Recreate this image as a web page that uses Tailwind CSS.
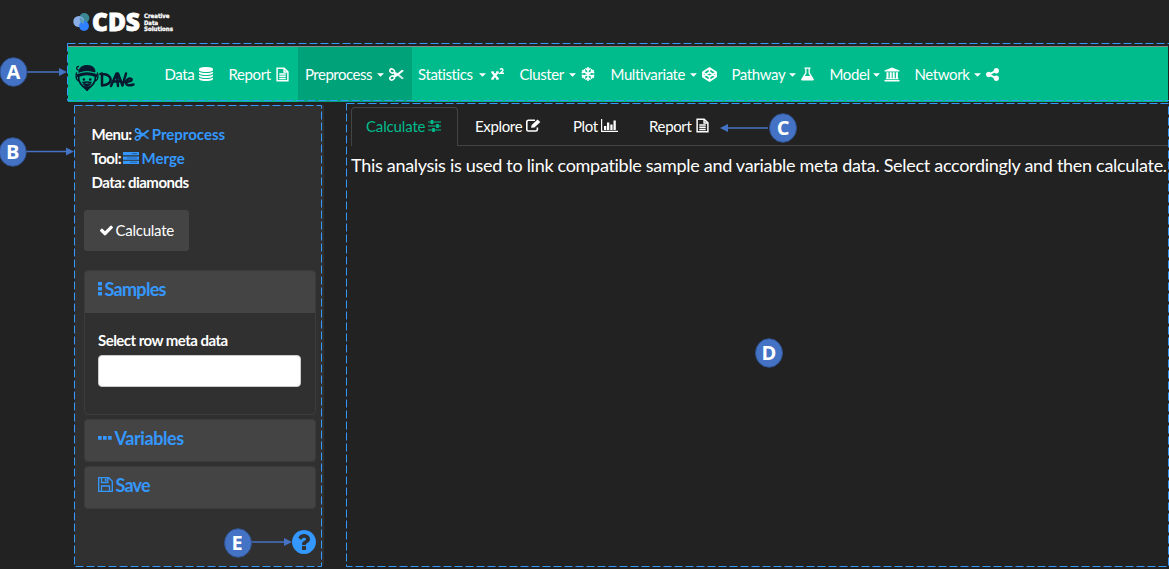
<!DOCTYPE html>
<html lang="en">
<head>
<meta charset="utf-8">
<title>DAVe</title>
<script src="https://cdn.jsdelivr.net/npm/@tailwindcss/browser@4"></script>
</head>
<body class="bg-[#222] text-white font-['Lato',sans-serif] text-[15px] leading-[22px]">
<svg class="hidden">
  <symbol id="caret" viewBox="0 0 8 4"><path d="M0 0h8L4 4z"/></symbol>
  <symbol id="doc" viewBox="0 0 14 16"><g fill="none" stroke="currentColor" stroke-width="1.600"><path d="M1.2 1.2h7.600l4 4v9.600H1.200z"/><path d="M8.700 1v4.300h4M3.500 7.500h7M3.500 10h7M3.500 12.400h7"/></g></symbol>
  <symbol id="scissors" viewBox="0 0 16 14"><g fill="none" stroke="currentColor" stroke-width="1.700"><ellipse cx="3.300" cy="3.200" rx="2.600" ry="2" transform="rotate(28 3.300 3.200)"/><ellipse cx="3.300" cy="10.800" rx="2.600" ry="2" transform="rotate(-28 3.300 10.800)"/></g><path d="M5 4.500 8.500 6.300 14 2l2 .9L9.500 8.300 5.700 10.500 4.500 9.200 7 7 4.400 5.800z"/><path d="M5 9.500 8.500 7.700 14 12l2-.9L9.500 5.700 5.700 3.500z" fill-opacity=".8"/></symbol>
</svg>
<div class="relative w-[1169px] h-[569px] overflow-hidden flex flex-col">
  <header class="h-[46px] shrink-0 flex pl-[73px] pt-[12px]">
    <svg class="w-[17px] h-[20px]" viewBox="0 0 17 20"><circle cx="11.300" cy="6" r="5" fill="#3b8795"/><circle cx="5.800" cy="9.500" r="5.500" fill="#8aaee6"/><circle cx="11" cy="14" r="4.900" fill="#2f80ff"/><path d="M7 5.500a5.500 5.500 0 0 1 4 6.300 5 5 0 0 1-4.400-5z" fill="#5a9ab8"/></svg>
    <svg class="w-[86px] h-[28px] ml-[1px] overflow-visible" viewBox="0 0 86 28" fill="#fff" stroke="#fff"><text x="1" y="18.800" font-family="Open Sans" font-weight="800" font-size="24" textLength="48" lengthAdjust="spacingAndGlyphs" stroke-width=".8">CDS</text><g font-family="DejaVu Sans" font-weight="700" font-size="6" stroke-width=".3"><text x="53" y="5.800" textLength="25.500" lengthAdjust="spacingAndGlyphs">Creative</text><text x="53" y="12.500" textLength="14" lengthAdjust="spacingAndGlyphs">Data</text><text x="53" y="19.300" textLength="29" lengthAdjust="spacingAndGlyphs">Solutions</text></g></svg>
  </header>

  <nav class="ml-[68px] mr-[1px] h-[56px] shrink-0 bg-[#00bc8c] border-t border-[#8b8b8b] flex tracking-[-0.4px]">
    <div class="w-[89px] pl-[7px] pt-[17px]">
      <svg class="w-[62px] h-[30px]" viewBox="0 0 62 30" fill="none" stroke="#08182f" stroke-linecap="round" stroke-linejoin="round">
        <path d="M4 8Q4 1.500 12 1.500T20 8Q12 5 4 8Z" fill="#08182f"/><path d="M3 11.500q9-3.500 18 0" stroke-width="3.200"/>
        <path d="M3.500 2.500a1.800 1.800 0 1 0 0 3.600M1.500 9q-1.500 6 2 8M22.500 9q1.500 6-2 8" stroke-width="1.300"/>
        <path d="M3.500 12q-.5 8 8.500 13.500Q21 20 20.500 12" stroke-width="1.700"/><path d="m9 23 3 4 3-4z" fill="#08182f"/>
        <path d="M8.800 15.500h.1M15.200 15.500h.1" stroke-width="2.600"/><path d="M8 18.500q4 4 8 0-4-1-8 0M9 20.500q3 2 6 0" stroke-width="1.600"/>
        <path d="M27 9.500v12q9.500-1 8.500-7-2-5-10-4.500M36 22l5.500-12.500L43 22m-5-4.500h6M43 9.500l4.500 12L51 9.500M50.500 18q7-.5 6-3-3.500-2-5.500 3 0 5 7.500 2.500" stroke-width="2.500"/>
      </svg>
    </div>
    <div class="flex pb-px">
    <div class="w-[64px] flex items-center justify-between pl-[7.500px] pr-[8px]"><span>Data</span>
      <svg class="w-[14px] h-[14px]" viewBox="128 0 1536 1792" preserveAspectRatio="none" fill="currentColor"><path d="M896 768q237 0 443-43t325-127v170q0 69-103 128t-280 93.500-385 34.500-385-34.500-280-93.500-103-128v-170q119 84 325 127t443 43zm0 768q237 0 443-43t325-127v170q0 69-103 128t-280 93.500-385 34.500-385-34.500-280-93.500-103-128v-170q119 84 325 127t443 43zm0-384q237 0 443-43t325-127v170q0 69-103 128t-280 93.500-385 34.500-385-34.500-280-93.500-103-128v-170q119 84 325 127t443 43zm0-1152q208 0 385 34.500t280 93.500 103 128v128q0 69-103 128t-280 93.500-385 34.500-385-34.500-280-93.500-103-128v-128q0-69 103-128t280-93.500 385-34.500z"/></svg></div>
    <div class="w-[77px] flex items-center justify-between pl-[7.500px] pr-[9px]"><span>Report</span><svg class="w-[13px] h-[15px]"><use href="#doc"/></svg></div>
    <div class="w-[114px] -mb-px pb-px bg-[#00a279] flex items-center pl-[7px] pr-[8px]"><span class="tracking-[-0.5px]">Preprocess</span><svg class="w-[7px] h-[4px] ml-auto mr-[5px] mt-[2px]" fill="currentColor"><use href="#caret"/></svg><svg class="w-[15px] h-[13px]" fill="currentColor"><use href="#scissors"/></svg></div>
    <div class="w-[101px] flex items-center pl-[6px] pr-[9px]"><span>Statistics</span><svg class="w-[7px] h-[4px] ml-auto mr-[5px] mt-[2px]" fill="currentColor"><use href="#caret"/></svg>
      <svg class="w-[13px] h-[14px]" viewBox="0 0 13 14" fill="none" stroke="currentColor"><path d="m1 5 6 7M7 5l-6 7" stroke-width="2.200"/><path d="M0 5h3M5 5h3M0 12h3M5 12h3" stroke-width="1"/><path d="M9 2.500Q10 1.300 11.500 2q1.500 1.500-2.500 4.300h4" stroke-width="1.400"/></svg></div>
    <div class="w-[91px] flex items-center pl-[6.500px] pr-[9px]"><span>Cluster</span><svg class="w-[7px] h-[4px] ml-auto mr-[5px] mt-[2px]" fill="currentColor"><use href="#caret"/></svg>
      <svg class="w-[14px] h-[14px]" viewBox="0 0 14 14" fill="none" stroke="currentColor" stroke-width="1.500"><path d="M7 0v14M1 3.500l12 7M13 3.500l-12 7M4.500 1.300 7 3.500l2.500-2.200M4.500 12.700 7 10.500l2.500 2.200M.7 5.800l3-.7-.4-3M13.300 5.800l-3-.7.4-3M.7 8.200l3 .7-.4 3M13.300 8.200l-3 .7.4 3"/></svg></div>
    <div class="w-[120px] flex items-center pl-[6.500px] pr-[7.500px]"><span>Multivariate</span><svg class="w-[7px] h-[4px] ml-auto mr-[5px] mt-[2px]" fill="currentColor"><use href="#caret"/></svg>
      <svg class="w-[15px] h-[15px]" viewBox="0 0 16 16" fill="none" stroke="currentColor" stroke-width="1.800" stroke-linejoin="round"><path d="M8 1l7 4.600v4.800L8 15l-7-4.600V5.600zM8 1v4.600M8 10.400V15M1 5.600l7 4.800 7-4.800M1 10.400l7-4.800 7 4.800"/></svg></div>
    <div class="w-[98px] flex items-center pl-[7.500px] pr-[8.500px]"><span>Pathway</span><svg class="w-[7px] h-[4px] ml-auto mr-[5px] mt-[2px]" fill="currentColor"><use href="#caret"/></svg>
      <svg class="w-[13px] h-[14px]" viewBox="0 0 13 14" fill="currentColor"><path d="M3.500.5h6v1.300H8.800v4L12.700 12q.7 1.600-1 1.600H1.300q-1.700 0-1-1.600L4.200 5.800v-4h-.7zM5.500 1.800v4.400L3.900 8.900h5.200L7.500 6.200V1.800z" fill-rule="evenodd"/></svg></div>
    <div class="w-[85px] flex items-center pl-[7.500px] pr-[7px]"><span>Model</span><svg class="w-[7px] h-[4px] ml-auto mr-[4px] mt-[2px]" fill="currentColor"><use href="#caret"/></svg>
      <svg class="w-[16px] h-[15px]" viewBox="0 0 16 15" fill="currentColor"><path d="M8 .5 15.500 3.500v1H.5v-1zM2.500 5.300h2v6h1.200v-6h2v6h1v-6h2v6h1.200v-6h2v6h.6v1H1.700v-1h.8zM.5 13h15v1.500H.5z"/></svg></div>
    <div class="w-[100px] flex items-center pl-[7.500px] pr-[8.500px]"><span>Network</span><svg class="w-[7px] h-[4px] ml-auto mr-[5px] mt-[2px]" fill="currentColor"><use href="#caret"/></svg>
      <svg class="w-[13px] h-[13px]" viewBox="128 128 1536 1536" fill="currentColor"><path d="M1344 1024q133 0 226.500 93.500t93.500 226.500-93.500 226.500-226.500 93.500-226.500-93.500-93.500-226.500q0-12 2-34l-360-180q-92 86-218 86-133 0-226.500-93.500t-93.500-226.500 93.500-226.500 226.500-93.500q126 0 218 86l360-180q-2-22-2-34 0-133 93.500-226.500t226.500-93.500 226.500 93.500 93.500 226.500-93.500 226.500-226.500 93.500q-126 0-218-86l-360 180q2 22 2 34t-2 34l360 180q92-86 218-86z"/></svg></div>
    </div>
  </nav>

  <div class="flex flex-1 min-h-0">
    <aside class="ml-[75px] mt-[3px] w-[249px] h-[461px] bg-[#303030] rounded-b-[3px] pl-[8.500px] pr-[8.500px] flex flex-col">
      <div class="pl-[8px] pt-[18px] font-bold flex flex-col gap-[2.400px] tracking-[-0.5px]">
        <p class="flex items-center h-[22px]">Menu:<svg class="w-[16px] h-[13px] ml-[2px] mr-[2px] text-[#3498ff]" fill="currentColor"><use href="#scissors"/></svg><span class="text-[#3498ff] tracking-normal">Preprocess</span></p>
        <p class="flex items-center">Tool:<svg class="w-[16px] h-[12px] ml-[2px] mr-[2.500px]" viewBox="0 0 16 12" fill="#3498ff"><path d="M0 0h16v3.300H0zM0 4.400h16v3.300H0zM0 8.700h16V12H0z"/><path d="M9 1.600h5M4 6h10M7 10.300h7" stroke="#2465b0" stroke-width="1.100"/></svg><span class="text-[#3498ff] tracking-normal">Merge</span></p>
        <p class="-mt-px">Data: diamonds</p>
      </div>
      <button class="mt-[17px] w-[105px] h-[41px] shrink-0 rounded-[3px] bg-[#444] flex items-center pl-[16px] gap-[3px] tracking-[-0.25px]"><svg class="w-[13px] h-[11px]" viewBox="121 320 1550 1202" fill="currentColor"><path d="M1671 566q0 40-28 68l-724 724-136 136q-28 28-68 28t-68-28l-136-136-362-362q-28-28-28-68t28-68l136-136q28-28 68-28t68 28l294 295 656-657q28-28 68-28t68 28l136 136q28 28 28 68z"/></svg>Calculate</button>
      <section class="mt-[19px] h-[145px] shrink-0 rounded-[4px] border border-[#3b3b3b] overflow-hidden">
        <h4 class="h-[42px] bg-[#444] text-[#3498ff] text-[18px] tracking-[-0.7px] font-bold flex items-center pl-[13px] pb-[5px]"><svg class="w-[4px] h-[14px] mr-[3px]" viewBox="0 0 4 14" fill="currentColor"><path d="M0 0h4v3.600H0zM0 5h4v3.600H0zM0 10h4v3.600H0z"/></svg>Samples</h4>
        <div class="px-[13.500px] pt-[16px]"><label class="block font-bold tracking-[-0.53px]">Select row meta data</label><div class="mt-[4px] h-[32px] rounded-[4px] bg-white border border-[#ccc]"></div></div>
      </section>
      <h4 class="mt-[4px] h-[43px] shrink-0 rounded-[4px] border border-[#3b3b3b] bg-[#444] text-[#3498ff] text-[18px] tracking-[-0.4px] font-bold flex items-center pl-[13px] pb-[5px]"><svg class="w-[14px] h-[4px] mr-[3px]" viewBox="0 0 14 4" fill="currentColor"><path d="M0 0h3.700v3.700H0zM5 0h3.700v3.700H5zM10 0h3.700v3.700H10z"/></svg>Variables</h4>
      <h4 class="mt-[4px] h-[43px] shrink-0 rounded-[4px] border border-[#3b3b3b] bg-[#444] text-[#3498ff] text-[18px] tracking-[-0.8px] font-bold flex items-center pl-[13px] pb-[5px]"><svg class="w-[15px] h-[15px] mr-[3px]" viewBox="0 0 15 15" fill="none" stroke="currentColor" stroke-width="1.300"><path d="M.7.7h10l3.600 3.600v10H.7zM3.500 14V9h8v5M3.500 1v4.500h6.300V1"/><path d="M7.700 1.700v2.500" stroke-width="1.800"/></svg>Save</h4>
      <svg class="self-end mt-[21px] w-[24px] h-[24px] shrink-0" viewBox="128 128 1536 1536" fill="#3498ff"><path d="M1024 1376v-192q0-14-9-23t-23-9h-192q-14 0-23 9t-9 23v192q0 14 9 23t23 9h192q14 0 23-9t9-23zm256-672q0-88-55.500-163t-138.500-116-170-41q-243 0-371 213-15 24 8 42l132 100q7 6 19 6 16 0 25-12 53-68 86-92 34-24 86-24 48 0 85.500 26t37.500 59q0 38-20 61t-68 45q-63 28-115.500 86.500t-52.500 125.500v36q0 14 9 23t23 9h192q14 0 23-9t9-23q0-19 21.500-49.500t54.500-49.500q32-18 49-28.500t46-35 44.500-48 28-60.500 12.500-81zm384 192q0 209-103 385.500t-279.500 279.500-385.500 103-385.500-103-279.500-279.500-103-385.500 103-385.500 279.500-279.500 385.500-103 385.500 103 279.500 279.500 103 385.500z"/></svg>
    </aside>
    <main class="ml-[27px] mt-[5px] flex-1 min-w-0">
      <div class="flex h-[39px]">
        <div class="w-[107px] border border-b-0 border-[#444] rounded-t-[4px] flex items-center text-[#00bc8c] pl-[14px] pb-[2px] tracking-[-0.15px]">Calculate<svg class="w-[13px] h-[12px] ml-[3px]" viewBox="0 0 13 12" fill="none" stroke="currentColor"><path d="M0 2h13M0 6h13M0 10h13" stroke-width="1.200"/><path d="M4 0v4M9.500 4v4M5.500 8v4" stroke-width="2.600"/></svg></div>
        <div class="flex-1 border-b border-[#444] flex items-center pl-[17px] pb-px tracking-[-0.35px]">
          <div class="w-[98px] flex items-center">Explore<svg class="w-[15px] h-[13px] ml-[4px]" viewBox="0 0 15 13" fill="none" stroke="currentColor"><path d="M9 1.200H2.500Q.8 1.200.8 3v7.300Q.8 12 2.500 12h7.300q1.600 0 1.600-1.700V8.500" stroke-width="1.600"/><path d="M5 8.800 5.700 6 11.500.5l2.800 2.500-5.800 5.500z" fill="currentColor" stroke="none"/></svg></div>
          <div class="w-[76px] flex items-center">Plot<svg class="w-[17px] h-[13px] ml-[3px]" viewBox="0 0 17 13" fill="currentColor"><path d="M0 0h1.200v11.700H17V13H0zM3 7h2.300v4H3zM6 3.500h2.300V11H6zM9.300 5.500h2.300V11H9.300zM12.500 1.500h2.300V11h-2.300z"/></svg></div>
          <div class="flex items-center">Report<svg class="w-[13px] h-[15px] ml-[5px]"><use href="#doc"/></svg></div>
        </div>
      </div>
      <p class="mt-[6px] text-[18px] leading-[27px] tracking-[-0.295px] whitespace-nowrap">This analysis is used to link compatible sample and variable meta data. Select accordingly and then calculate.</p>
    </main>
  </div>

  <svg class="absolute inset-0 w-[1169px] h-[569px]" viewBox="0 0 1169 569">
    <g fill="none" stroke="#3399ff" stroke-dasharray="8 3">
      <path d="M67.500 43.500H1169M67.500 43.500V100.500H1169"/>
      <path d="M74.500 105.500H321.500V566.500H74.500z"/>
      <path d="M346.500 103.500H1168.500V566.500H346.500z"/>
    </g>
    <g stroke="#4472c4" stroke-width="1.600" fill="#4472c4">
      <path d="M27 72h34M26 151.500h41M768 128h-41M251 542h35"/>
      <g stroke="none"><path d="M59 68l8 4-8 4zM66 147.500l8 4-8 4zM728 124l-8 4 8 4zM284 538l8 4-8 4z"/></g>
      <g stroke="#2f528f" stroke-width="1"><ellipse cx="13.500" cy="72" rx="13.500" ry="14.300"/><ellipse cx="12.800" cy="152" rx="13.500" ry="14.300"/><ellipse cx="783" cy="128" rx="13.500" ry="14.300"/><ellipse cx="769" cy="353" rx="13.500" ry="14.300"/><ellipse cx="238" cy="543" rx="13.500" ry="14.300"/></g>
    </g>
    <g fill="#fff" font-family="Open Sans" font-weight="700" font-size="20" text-anchor="middle"><text x="13.300" y="79">A</text><text x="12.800" y="159">B</text><text x="783" y="135">C</text><text x="769" y="360">D</text><text x="237" y="550">E</text></g>
  </svg>
</div>
</body>
</html>
